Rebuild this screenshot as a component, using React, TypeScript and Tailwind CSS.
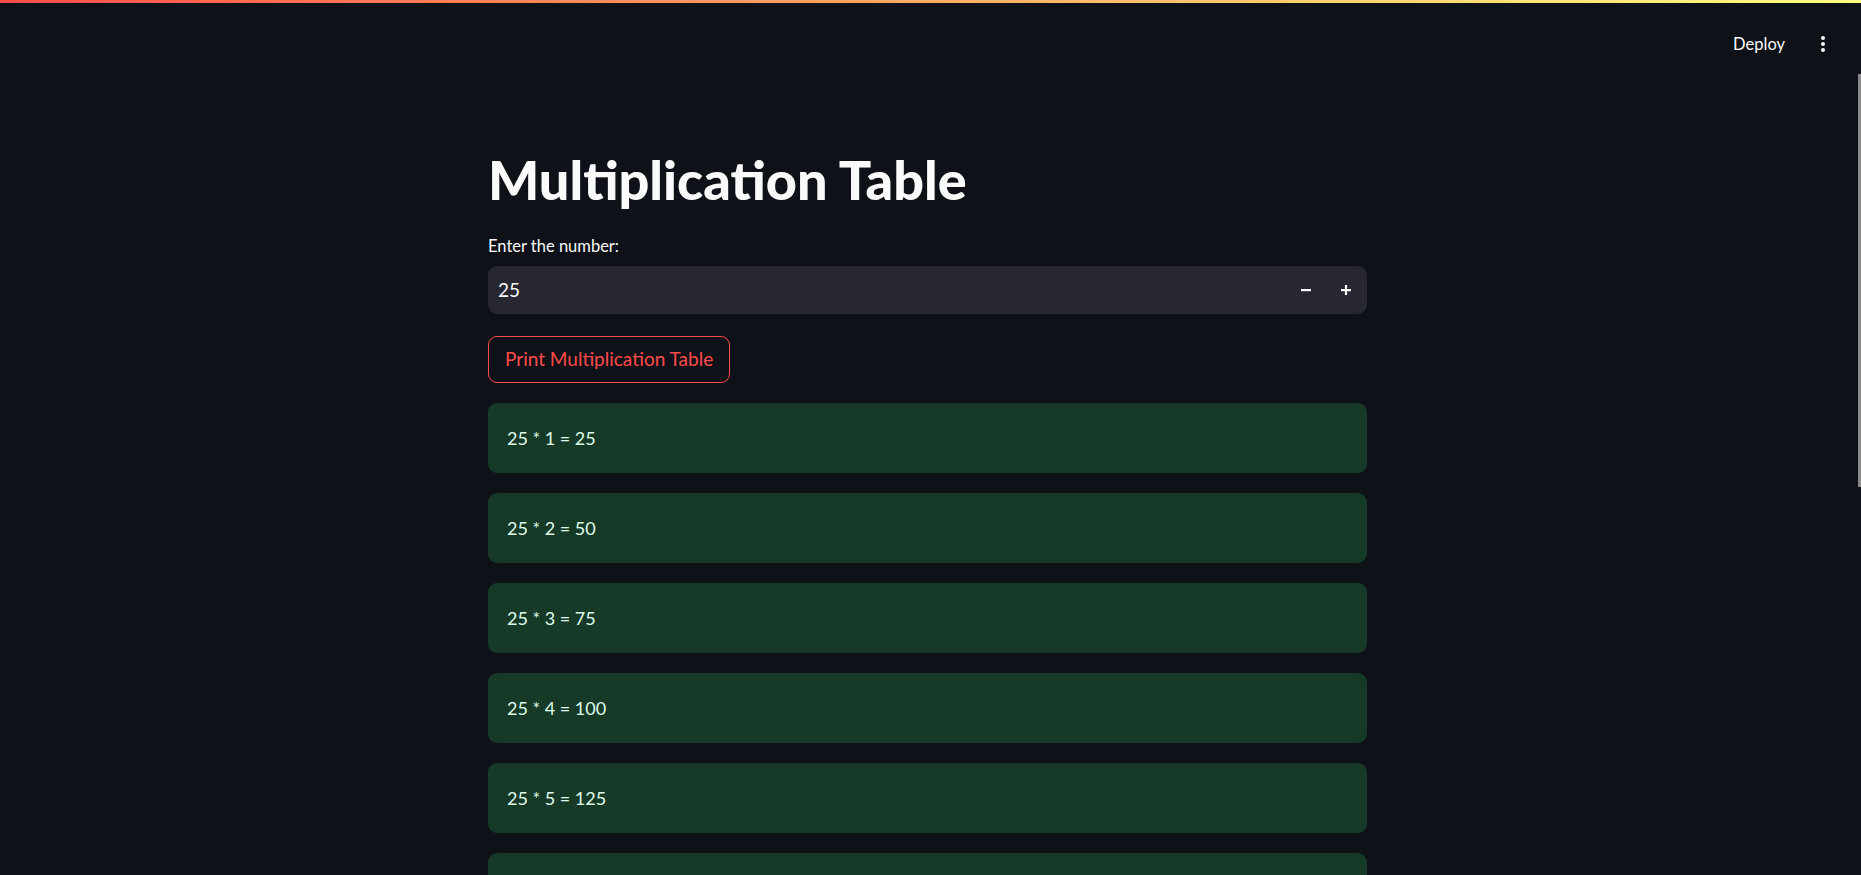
import React from "react";

const rows = Array.from({ length: 10 }, (_, i) => i + 1);

export default function App() {
  return (
    <div
      className="relative h-[875px] w-full overflow-hidden bg-[#0e1117] text-[#fafafa]"
      style={{ fontFamily: "Lato, 'Noto Sans', sans-serif" }}
    >
      <div className="h-[3px] w-full bg-gradient-to-r from-[#ff4b4b] to-[#fffd80]" />
      <header className="flex h-[82px] items-center justify-end pr-[30px]">
        <span className="mr-[30px] text-[16.5px] text-[#fafafa]">Deploy</span>
        <div className="flex w-[16px] flex-col items-center gap-[2px]">
          <span className="h-[4px] w-[4px] rounded-full bg-[#fafafa]" />
          <span className="h-[4px] w-[4px] rounded-full bg-[#fafafa]" />
          <span className="h-[4px] w-[4px] rounded-full bg-[#fafafa]" />
        </div>
      </header>
      <div className="absolute right-0 top-[74px] h-[413px] w-[3px] bg-[#8b8b8b]" />
      <main className="flex justify-center pr-[6px]">
        <div className="flex w-[879px] flex-col">
          <h1 className="mt-[64px] h-[62px] text-[54px] font-black leading-[62px]">
            Multiplication Table
          </h1>
          <label className="mt-[23px] text-[16.5px] leading-[24px]">Enter the number:</label>
          <div className="mt-[8px] flex h-[48px] items-center rounded-[9px] bg-[#262730]">
            <span className="flex-1 pl-[10px] text-[19px]">25</span>
            <button className="flex h-full w-[40px] items-center justify-center">
              <svg width="12" height="12" viewBox="0 0 12 12">
                <rect x="1" y="5" width="10" height="2.2" fill="#fafafa" />
              </svg>
            </button>
            <button className="mr-[1px] flex h-full w-[40px] items-center justify-center">
              <svg width="12" height="12" viewBox="0 0 12 12">
                <rect x="1" y="5" width="10" height="2.2" fill="#fafafa" />
                <rect x="4.9" y="1" width="2.2" height="10" fill="#fafafa" />
              </svg>
            </button>
          </div>
          <div className="mt-[22px]">
            <button className="h-[47px] rounded-[9px] border border-[#ff4b4b] px-[16px] text-[19px] text-[#ff4b4b]">
              Print Multiplication Table
            </button>
          </div>
          <div className="mt-[20px] flex flex-col gap-[20px]">
            {rows.map((n) => (
              <div
                key={n}
                className="flex h-[70px] shrink-0 items-center rounded-[9px] bg-[#173928] px-[19px] text-[18px] text-[#dffde9]"
              >
                25 * {n} = {25 * n}
              </div>
            ))}
          </div>
        </div>
      </main>
    </div>
  );
}
